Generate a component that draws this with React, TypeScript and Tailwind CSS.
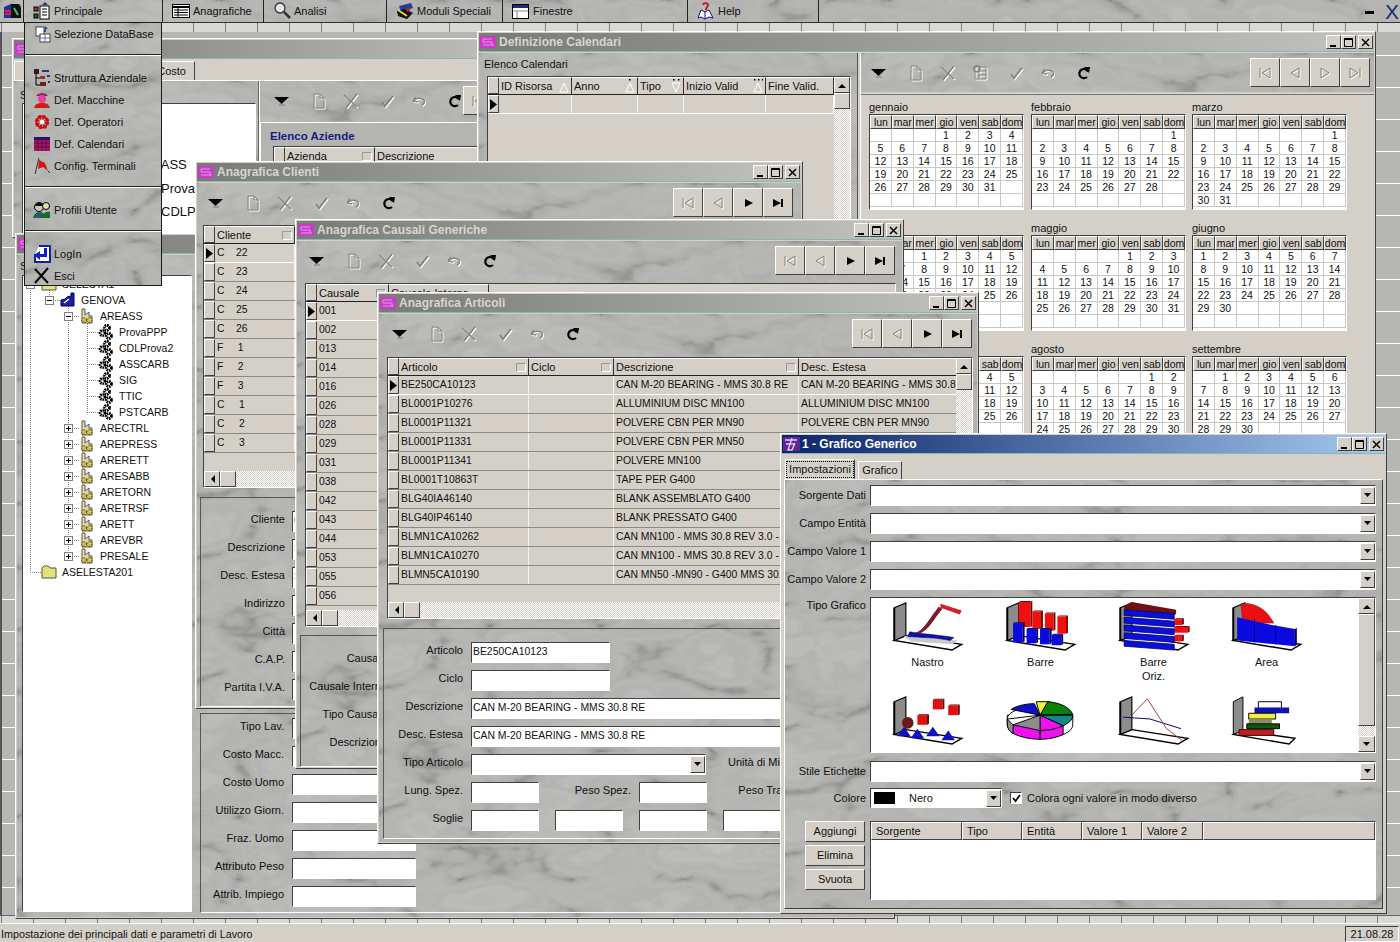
import type { ReactNode } from "react";

const raised = "border border-t-white border-l-white border-r-[#404040] border-b-[#404040]";
const sunken = "border border-t-[#404040] border-l-[#404040] border-r-white border-b-white";
const marble = "relative isolate bg-[#b4b4b0]";
const groove = "border border-t-[#555552] border-l-[#555552] border-r-white border-b-white";
const dither = "bg-[repeating-conic-gradient(#d4d0c8_0%_25%,#ffffff_0%_50%)] bg-[size:2px_2px]";
const ticks = "bg-[#d8d8d4] bg-[linear-gradient(to_right,#7d7d79_1px,transparent_1px)] bg-[size:32px_100%] bg-[position:1px_0]";

function Marble() {
  return (
    <svg className="absolute inset-0 -z-10 w-full h-full" aria-hidden="true">
      <rect width="100%" height="100%" filter="url(#marble)" />
    </svg>
  );
}

function Ic({ w = 18, h = 18, children }: { w?: number; h?: number; children: ReactNode }) {
  return (
    <svg width={w} height={h} viewBox={`0 0 ${w} ${h}`} className="shrink-0">
      {children}
    </svg>
  );
}

function Ghost({ children }: { children: ReactNode }) {
  return (
    <>
      <g transform="translate(1 1)" stroke="#ffffff" fill="none" strokeWidth="1.5">{children}</g>
      <g stroke="#84847f" fill="none" strokeWidth="1.5">{children}</g>
    </>
  );
}

const ToolDrop = () => <Ic w={16} h={16}><path d="M0 4h15l-7.5 7z" fill="#000" /><path d="M5 12h6" stroke="#777" /></Ic>;
const ToolPage = () => <Ic w={16} h={18}><Ghost><path d="M3 2h6l4 4v10H3zM9 2v4h4" strokeWidth="1" /></Ghost></Ic>;
const ToolX = () => <Ic w={16} h={16}><Ghost><path d="M1 2l13 12M14 1L3 15" /></Ghost></Ic>;
const ToolCal = () => <Ic w={16} h={18}><Ghost><path d="M3 3h11v12H3zM7 7h7M7 11h7M7 3v12" strokeWidth="1" /><circle cx="5" cy="5" r="3" /></Ghost></Ic>;
const ToolCheck = () => <Ic w={16} h={16}><Ghost><path d="M3 9l3 4 8-10" strokeWidth="2" /></Ghost></Ic>;
const ToolUndo = () => <Ic w={16} h={16}><Ghost><path d="M2 8l3-4M2 8l5 1M2 8c3-3 8-4 11-1 1 2 0 4-2 5" /></Ghost></Ic>;
const ToolRefresh = () => <Ic w={16} h={16}><path d="M12 6.5A4.6 4.6 0 1 0 11 12" stroke="#000" strokeWidth="2.2" fill="none" /><path d="M8 2l6 0-1 6z" fill="#000" /></Ic>;

function Toolbar({ lead, navClass, extra, navOn = true }: { lead: string; navClass: string; extra?: boolean; navOn?: boolean }) {
  return (
    <div className="h-[39px] flex items-center shrink-0">
      <div className={lead}><ToolDrop /></div>
      <div className="ml-[21px]"><ToolPage /></div>
      <div className="ml-[16px]"><ToolX /></div>
      {extra && <div className="ml-[16px]"><ToolCal /></div>}
      <div className="ml-[20px]"><ToolCheck /></div>
      <div className="ml-[16px]"><ToolUndo /></div>
      <div className="ml-[20px]"><ToolRefresh /></div>
      <div className={`ml-auto flex ${navClass}`}>
        <NavBtn><Ghost><path d="M3 3v10M13 3L5 8l8 5z" strokeWidth="1" /></Ghost></NavBtn>
        <NavBtn><Ghost><path d="M12 3L4 8l8 5z" strokeWidth="1" /></Ghost></NavBtn>
        <NavBtn>{navOn ? <path d="M5 4l8 4-8 4z" fill="#000" /> : <Ghost><path d="M4 3l8 5-8 5z" strokeWidth="1" /></Ghost>}</NavBtn>
        <NavBtn>{navOn ? <path d="M3 4l8 4-8 4zM11 4h2v8h-2z" fill="#000" /> : <Ghost><path d="M13 3v10M3 3l8 5-8 5z" strokeWidth="1" /></Ghost>}</NavBtn>
      </div>
    </div>
  );
}

function NavBtn({ children }: { children: ReactNode }) {
  return (
    <div className={`w-[30px] h-[29px] bg-[#d4d0c8] flex items-center justify-center ${raised}`}>
      <Ic w={16} h={16}>{children}</Ic>
    </div>
  );
}

function Win({ title, place, active, children }: { title: string; place: string; active?: boolean; children: ReactNode }) {
  return (
    <div className={`absolute flex flex-col overflow-hidden bg-[#d4d0c8] p-px ${raised} ${place}`}>
      <div className={`h-[19px] shrink-0 flex items-center pl-px pr-px border-b border-[#7fbab5] ${active ? "bg-[linear-gradient(90deg,#0a246a,#a6caf0)] text-white" : "bg-[linear-gradient(90deg,#7a7a76,#c2c2be)] text-[#d6d6ce]"}`}>
        <svg width="17" height="14" viewBox="0 0 17 14" className="shrink-0 mr-[2px]">
          {active ? (
            <>
              <rect x="0" y="0" width="17" height="14" fill="#5b2a8c" />
              <path d="M2 3h12M3 7h9M9 1L5 13h4l3-7" stroke="#e9c6ff" strokeWidth="1.4" fill="none" />
            </>
          ) : (
            <>
              <rect x="0" y="1" width="16" height="12" fill="#c53fc5" />
              <path d="M3 4h9M3 10h11M3 4v3h9v3" stroke="#e694e6" fill="none" />
            </>
          )}
        </svg>
        <span className="font-bold text-[12px] whitespace-nowrap">{title}</span>
        <div className="ml-auto flex items-center">
          <WinBtn><path d="M3 10h6" stroke="#000" strokeWidth="2" /></WinBtn>
          <WinBtn><path d="M2.5 2.5h8v8h-8zM2.5 3.5h8" stroke="#000" fill="none" /></WinBtn>
          <div className="w-[2px]" />
          <WinBtn><path d="M3 3l7 7M10 3l-7 7" stroke="#000" strokeWidth="1.5" /></WinBtn>
        </div>
      </div>
      <div className="flex-1 min-h-0 mt-px flex flex-col">{children}</div>
    </div>
  );
}

function WinBtn({ children }: { children: ReactNode }) {
  return (
    <div className={`w-[15px] h-[14px] bg-[#d4d0c8] flex items-center justify-center ${raised}`}>
      <Ic w={13} h={12}>{children}</Ic>
    </div>
  );
}

type Col = { name: string; w: string; glyph?: "box" | "up" | "none"; dots?: number; down?: boolean };

function Glyph({ col }: { col: Col }) {
  if (col.glyph === "box") return <div className="ml-auto mr-[2px] w-[10px] h-[9px] border border-t-[#999] border-l-[#999] border-r-white border-b-white" />;
  if (col.glyph === "up")
    return (
      <svg width="10" height="14" viewBox="0 0 10 14" className="ml-auto mr-[2px]">
        {[0, 1, 2].slice(0, col.dots ?? 0).map((d) => (
          <rect key={d} x={(col.dots === 1 ? 4 : col.dots === 2 ? 2 + d * 5 : d * 4 + 1)} y="0" width="1.5" height="1.5" fill="#000" />
        ))}
        <path d={col.down ? "M1 4h8l-4 9z" : "M5 4l4 9H1z"} fill="none" stroke="#fff" />
      </svg>
    );
  return null;
}

function VScroll() {
  return (
    <div className={`w-[16px] shrink-0 flex flex-col ${dither}`}>
      <div className={`h-[16px] bg-[#d4d0c8] flex items-center justify-center ${raised}`}>
        <svg width="8" height="5" viewBox="0 0 8 5"><path d="M0 5l4-4 4 4z" fill="#000" /></svg>
      </div>
      <div className={`h-[16px] bg-[#d4d0c8] ${raised}`} />
    </div>
  );
}

function HScroll() {
  return (
    <div className={`h-[16px] shrink-0 flex ${dither}`}>
      <div className={`w-[16px] bg-[#d4d0c8] flex items-center justify-center ${raised}`}>
        <svg width="5" height="8" viewBox="0 0 5 8"><path d="M5 0L1 4l4 4z" fill="#000" /></svg>
      </div>
      <div className={`w-[16px] bg-[#d4d0c8] ${raised}`} />
    </div>
  );
}

function Grid({ cols, rows, place, vs, hs }: { cols: Col[]; rows: string[][]; place: string; vs?: boolean; hs?: boolean }) {
  return (
    <div className={`flex flex-col bg-[#d4d0c8] overflow-hidden ${sunken} ${place}`}>
      <div className="flex-1 min-h-0 flex">
        <div className="flex-1 min-w-0 overflow-hidden">
          <div className="flex h-[18px] border-b border-[#222]">
            <div className={`w-[11px] shrink-0 bg-[#d4d0c8] ${raised}`} />
            {cols.map((c) => (
              <div key={c.name} className={`shrink-0 flex items-center pl-[2px] bg-[#d4d0c8] whitespace-nowrap overflow-hidden border-r border-[#333] border-t border-t-white ${c.w}`}>
                {c.name}
                <Glyph col={c} />
              </div>
            ))}
          </div>
          {rows.map((r, i) => (
            <div key={r[0] + i} className={`flex h-[19px] text-[10.4px] border-b ${i === 0 ? "border-white" : "border-[#8b8b86]"}`}>
              <div className={`w-[11px] shrink-0 bg-[#d4d0c8] flex items-center justify-center ${raised}`}>
                {i === 0 && <svg width="7" height="11" viewBox="0 0 7 11"><path d="M0 0l7 5.5L0 11z" fill="#000" /></svg>}
              </div>
              {cols.map((c, j) => (
                <div key={c.name} className={`shrink-0 flex items-center pl-[2px] whitespace-pre overflow-hidden border-r border-[#f4f4f0] ${c.w}`}>
                  {r[j] ?? ""}
                </div>
              ))}
            </div>
          ))}
        </div>
        {vs && <VScroll />}
      </div>
      {hs && <HScroll />}
    </div>
  );
}

function Field({ w, value, drop }: { w: string; value?: string; drop?: boolean }) {
  return (
    <div className={`h-[21px] shrink-0 bg-white flex items-center pl-[1px] text-[10.4px] whitespace-nowrap overflow-hidden ${sunken} ${w}`}>
      {value}
      {drop && <DropBtn />}
    </div>
  );
}

function DropBtn() {
  return (
    <div className={`ml-auto w-[15px] h-[17px] shrink-0 bg-[#d4d0c8] flex items-center justify-center ${raised}`}>
      <svg width="7" height="4" viewBox="0 0 7 4"><path d="M0 0h7L3.5 4z" fill="#000" /></svg>
    </div>
  );
}

function FormRow({ label, w, gap, up, children }: { label: string; w: string; gap: string; up?: boolean; children?: ReactNode }) {
  return (
    <div className="h-[28px] flex items-center">
      <div className={`shrink-0 text-right whitespace-nowrap ${up ? "-mt-[4px]" : ""} ${w} ${gap}`}>{label}</div>
      {children}
    </div>
  );
}

// tree icons
const Folder = () => <Ic w={16} h={14}><path d="M1 3l2-2h4l2 2h6v10H1z" fill="#e6e27a" stroke="#55553a" /></Ic>;
const Factory = () => (
  <Ic w={16} h={16}>
    <path d="M3 1h3v6l4-3v4h3v7H3z" fill="#e4dca0" stroke="#555" />
    <circle cx="5" cy="12" r="2.4" fill="#d8c040" stroke="#222" strokeDasharray="1 1" />
    <circle cx="10.5" cy="12" r="2.6" fill="#d8c040" stroke="#222" strokeDasharray="1 1" />
  </Ic>
);
const Gears = () => (
  <Ic w={16} h={16}>
    <circle cx="9" cy="3.8" r="2.5" fill="#fff" stroke="#000" strokeWidth="2.8" strokeDasharray="1.6 .7" />
    <circle cx="4.5" cy="9" r="2.5" fill="#fff" stroke="#000" strokeWidth="2.8" strokeDasharray="1.6 .7" />
    <circle cx="11" cy="12" r="2.5" fill="#fff" stroke="#000" strokeWidth="2.8" strokeDasharray="1.6 .7" />
  </Ic>
);
const Plant = () => (
  <Ic w={16} h={16}>
    <path d="M1 14V8l4-1 2-2 4-1V1h3v13z" fill="#1c1ca8" stroke="#000050" />
    <path d="M4 11l5-4" stroke="#fff" strokeWidth="1.5" />
  </Ic>
);

function TreeRow({ pad, exp, icon, text }: { pad: string; exp?: "+" | "-"; icon: ReactNode; text: string }) {
  return (
    <div className={`h-[16px] flex items-center ${pad}`}>
      <div className="w-[9px] h-[9px] shrink-0 relative">
        {exp && (
          <svg width="9" height="9" viewBox="0 0 9 9" className="block">
            <rect x="0.5" y="0.5" width="8" height="8" fill="#fff" stroke="#808080" />
            <path d={exp === "+" ? "M2 4.5h5M4.5 2v5" : "M2 4.5h5"} stroke="#000" />
          </svg>
        )}
      </div>
      <div className="w-[16px] ml-[6px] mr-[5px] shrink-0 relative">{icon}</div>
      <span className="text-[10.5px]">{text}</span>
    </div>
  );
}

function Tree() {
  const areas = ["ARECTRL", "AREPRESS", "ARERETT", "ARESABB", "ARETORN", "ARETRSF", "ARETT", "AREVBR", "PRESALE"];
  const sub = ["ProvaPPP", "CDLProva2", "ASSCARB", "SIG", "TTIC", "PSTCARB"];
  const h = [40, 152, 168, 184, 200, 216, 232, 248, 264, 280];
  return (
    <div className="relative">
      <svg className="absolute left-0 top-0" width="170" height="310" fill="none" stroke="#808080" strokeDasharray="1 1">
        <path d="M7.5 0V296.5H18M26.5 8V24.5H37M45.5 24V280.5M64.5 40V136.5" />
        {h.map((y) => <path key={y} d={`M45 ${y + 0.5}H56`} />)}
        {[56, 72, 88, 104, 120, 136].map((y) => <path key={y} d={`M64 ${y + 0.5}H75`} />)}
      </svg>
      <TreeRow pad="pl-[3px]" exp="-" icon={<Folder />} text="SELESTA1" />
      <TreeRow pad="pl-[22px]" exp="-" icon={<Plant />} text="GENOVA" />
      <TreeRow pad="pl-[41px]" exp="-" icon={<Factory />} text="AREASS" />
      {sub.map((s) => <TreeRow key={s} pad="pl-[60px]" icon={<Gears />} text={s} />)}
      {areas.map((s) => <TreeRow key={s} pad="pl-[41px]" exp="+" icon={<Factory />} text={s} />)}
      <TreeRow pad="pl-[3px]" icon={<Folder />} text="ASELESTA201" />
    </div>
  );
}

const monthData: [string, number, number][] = [
  ["gennaio", 3, 31], ["febbraio", 6, 28], ["marzo", 6, 31],
  ["aprile", 2, 30], ["maggio", 4, 31], ["giugno", 0, 30],
  ["luglio", 2, 31], ["agosto", 5, 31], ["settembre", 1, 30],
  ["ottobre", 3, 31], ["novembre", 6, 30], ["dicembre", 1, 31],
];
const dayNames = ["lun", "mar", "mer", "gio", "ven", "sab", "dom"];

function Month({ name, first, len }: { name: string; first: number; len: number }) {
  const cells = Array.from({ length: 42 }, (_, i) => (i >= first && i - first < len ? String(i - first + 1) : ""));
  return (
    <div className="h-[121px]">
      <div className="h-[13px] leading-[13px]">{name}</div>
      <div className={`w-[155px] h-[96px] bg-white overflow-hidden ${sunken}`}>
        <div className="grid grid-cols-7 h-[14px] bg-[#d4d0c8]">
          {dayNames.map((d) => (
            <div key={d} className={`flex items-center justify-center text-[10.5px] ${raised}`}>{d}</div>
          ))}
        </div>
        <div className="grid grid-cols-7 auto-rows-[13px]">
          {cells.map((c, i) => (
            <div key={i} className="flex items-center justify-center border-r border-b border-[#c8c8c4] text-[10.5px]">{c}</div>
          ))}
        </div>
      </div>
    </div>
  );
}

// chart thumbnails for Tipo Grafico
function ChartBase() {
  return (
    <>
      <path d="M2 42L14 37 72 46 62 52z" fill="#fff" stroke="#000" strokeWidth="1.5" />
      <path d="M2 8L14 3V37L2 42z" fill="#8c8c8c" stroke="#000" strokeWidth="1.2" />
      <path d="M2 8V42" stroke="#000" strokeWidth="2" />
    </>
  );
}
function Chart({ children }: { children: ReactNode }) {
  return <svg width="74" height="52" viewBox="0 0 74 54">{children}</svg>;
}
function Bar3d({ x, y, w, h, c, d }: { x: number; y: number; w: number; h: number; c: string; d: string }) {
  return (
    <g>
      <rect x={x} y={y} width={w} height={h} fill={c} />
      <path d={`M${x + w} ${y}l2 -1v${h}l-2 1z`} fill={d} />
      <path d={`M${x} ${y}l2 -1h${w}l-2 1z`} fill={d} />
    </g>
  );
}
const charts: { name: string; draw: ReactNode }[] = [
  {
    name: "Nastro",
    draw: (
      <>
        <ChartBase />
        <path d="M12 38L20 43 62 46 68 42 14 37z" fill="#c8c8d0" />
        <path d="M18 33c10 2 30 3 46 6l-4 3c-14-3-32-3-44-4z" fill="#1010b0" stroke="#000040" strokeWidth=".5" />
        <path d="M24 34c8-2 14-14 24-27l4 2c-9 11-14 22-24 26z" fill="#7a1c30" />
        <path d="M50 4l22 7-2 4-20-7z" fill="#d02030" />
      </>
    ),
  },
  {
    name: "Barre",
    draw: (
      <>
        <ChartBase />
        <Bar3d x={14} y={2} w={12} h={26} c="#f01010" d="#7a0000" />
        <Bar3d x={28} y={12} w={9} h={18} c="#f01010" d="#7a0000" />
        <Bar3d x={41} y={14} w={9} h={18} c="#f01010" d="#7a0000" />
        <Bar3d x={54} y={17} w={9} h={18} c="#f01010" d="#7a0000" />
        <Bar3d x={8} y={24} w={10} h={20} c="#0a0ae0" d="#000060" />
        <Bar3d x={22} y={30} w={10} h={15} c="#0a0ae0" d="#000060" />
        <Bar3d x={36} y={30} w={10} h={16} c="#0a0ae0" d="#000060" />
        <Bar3d x={48} y={36} w={10} h={11} c="#0a0ae0" d="#000060" />
      </>
    ),
  },
  {
    name: "Barre\nOriz.",
    draw: (
      <>
        <ChartBase />
        <path d="M6 6L14 2 60 10v5L6 10z" fill="#701010" />
        <Bar3d x={58} y={20} w={8} h={6} c="#f01010" d="#700000" />
        <Bar3d x={58} y={28} w={14} h={6} c="#f01010" d="#700000" />
        <Bar3d x={58} y={37} w={8} h={6} c="#f01010" d="#700000" />
        {[10, 18, 26, 34, 42].map((y) => (
          <path key={y} d={`M6 ${y}L58 ${y + 4}v6L6 ${y + 6}z`} fill="#0a10d8" stroke="#000060" strokeWidth=".8" />
        ))}
      </>
    ),
  },
  {
    name: "Area",
    draw: (
      <>
        <ChartBase />
        <path d="M10 4c12-2 26 4 34 20H12z" fill="#e81010" stroke="#700" strokeWidth=".5" />
        <path d="M6 18l36 8 24 4v18L6 42z" fill="#0a0ae0" />
        <path d="M66 30l2-1v17l-2 2z" fill="#000060" />
        <path d="M24 20v24M46 26v20" stroke="#000090" />
      </>
    ),
  },
  {
    name: "Punti",
    draw: (
      <>
        <ChartBase />
        {[[26, 22], [42, 6], [58, 12]].map(([x, y]) => <Bar3d key={x} x={x} y={y} w={10} h={10} c="#e01010" d="#700000" />)}
        <circle cx="16" cy="30" r="6" fill="#701818" />
        {[[12, 34], [26, 36], [42, 34], [58, 38]].map(([x, y]) => <path key={x} d={`M${x} ${y}l7 10H${x - 7}z`} fill="#1010c0" />)}
      </>
    ),
  },
  {
    name: "Torta",
    draw: (
      <>
        <path d="M2 22v10c0 8 15 14 34 14s34-6 34-14V22z" fill="#fff" stroke="#000" />
        <path d="M36 22L2 26c0-8 15-12 26-13z" fill="#fff" stroke="#000" />
        <path d="M36 22L6 16c4-3 14-6 24-6z" fill="#1010c8" stroke="#000" />
        <path d="M36 22l-4-14h14z" fill="#f0f040" stroke="#000" />
        <path d="M36 22l8-14c12 1 22 5 26 13z" fill="#0a800a" stroke="#000" />
        <path d="M36 22h34c0 5-4 8-10 11z" fill="#108888" stroke="#000" />
        <path d="M36 22l24 11c-6 3-14 5-24 5z" fill="#f010f0" stroke="#000" />
        <path d="M36 22v16c-10 0-20-2-28-6z" fill="#8c8c8c" stroke="#000" />
        <path d="M36 38v9c-10 0-20-2-28-6v-9zM36 38c10 0 18-2 24-5v9c-6 3-14 5-24 5z" fill="#f010f0" stroke="#000" />
        <path d="M8 32v9c-4-2-6-6-6-9v-6z" fill="#8c8c8c" stroke="#000" />
      </>
    ),
  },
  {
    name: "Linee",
    draw: (
      <>
        <ChartBase />
        <path d="M5 24l28 2 32 10" stroke="#000070" fill="none" />
        <path d="M14 22L30 5 50 36 66 48" stroke="#a03848" fill="none" />
      </>
    ),
  },
  {
    name: "Gradini",
    draw: (
      <>
        <path d="M2 42L10 38 66 46 60 52z" fill="#fff" stroke="#000" strokeWidth="1.5" />
        <path d="M2 8L12 3V38L2 42z" fill="#8c8c8c" stroke="#000" />
        <path d="M28 8h24v7H28z" fill="#fff" stroke="#000" />
        <path d="M24 14h36v6H24z" fill="#1010b8" />
        <path d="M18 20h28v6H18z" fill="#f0f040" stroke="#000" />
        <path d="M18 26h24v5H18z" fill="#8c8c6c" />
        <path d="M16 31h34v5H16z" fill="#0a5a0a" stroke="#000" />
        <path d="M8 37h36v6H8z" fill="#c02020" stroke="#400" />
      </>
    ),
  },
];

// menu icons
const mi = {
  principale: <Ic><rect x="7" y="4" width="9" height="13" fill="#fff" stroke="#000" /><path d="M9 7h5M9 10h5M9 13h5" stroke="#000" /><rect x="1" y="5" width="4" height="4" fill="#a03030" stroke="#000" /><rect x="1" y="12" width="4" height="4" fill="#206020" stroke="#000" /><path d="M9 3l3-3 3 3z" fill="#303070" /></Ic>,
  anagrafiche: <Ic w={18} h={14}><rect x="0.5" y="0.5" width="17" height="13" fill="#fff" stroke="#000" /><path d="M1 3h16" stroke="#000" strokeWidth="2" /><path d="M2 6h14M2 8.5h14M2 11h14M6 4v9" stroke="#000" /></Ic>,
  analisi: <Ic><circle cx="7" cy="6" r="5" fill="#dfe4ea" stroke="#333" strokeWidth="1.3" /><path d="M11 10l6 6" stroke="#333" strokeWidth="2.5" /></Ic>,
  moduli: <Ic><path d="M3 4l12-3 2 5-12 4z" fill="#2040a0" /><path d="M1 9l8-2 8 4-6 6-9-3z" fill="#101010" /><path d="M2 8l9 6" stroke="#e8e020" strokeWidth="2" /><circle cx="12" cy="8" r="2" fill="#c02020" /></Ic>,
  finestre: <Ic w={17} h={15}><rect x="0.5" y="0.5" width="16" height="14" fill="#fff" stroke="#000" /><rect x="1" y="1" width="15" height="3" fill="#1c2a80" /><path d="M1 7h15M5 7v7" stroke="#888" /></Ic>,
  help: <Ic w={17} h={18}><path d="M1 16l3-8 4 2 4-2 4 8-4-1-4 2-4-2z" fill="#fff" stroke="#101080" /><path d="M8 10v7" stroke="#101080" /><path d="M6 3c1-3 5-2 5 0 0 2-2 2-2 5" fill="none" stroke="#c02020" strokeWidth="2" /></Ic>,
  db: <Ic><rect x="3" y="2" width="8" height="9" fill="#fff" stroke="#444" /><rect x="7" y="9" width="10" height="8" fill="#fff" stroke="#444" /><path d="M12 9v8M7 13h10" stroke="#6868a8" /><path d="M12 1l3 3h-2v3h-2" fill="#3040a0" /></Ic>,
  struttura: <Ic><rect x="1" y="0" width="5" height="5" fill="#401818" /><path d="M3 5v11h4M3 9h4" stroke="#000" fill="none" /><rect x="7" y="7" width="5" height="3" fill="#a03030" /><rect x="7" y="13" width="6" height="4" fill="#702020" /><path d="M9 2h7M14 7h3M15 13h2" stroke="#303080" strokeWidth="2" /></Ic>,
  macchine: <Ic><path d="M3 5h12l-2-2-4-1-4 1z" fill="#902060" /><circle cx="9" cy="8" r="4" fill="#e840a0" /><path d="M1 17c1-4 4-5 8-5s7 1 8 5z" fill="#d02010" /></Ic>,
  operatori: <Ic><circle cx="9" cy="9" r="5" fill="none" stroke="#d81010" strokeWidth="4.5" strokeDasharray="2.5 1.4" /><circle cx="9" cy="9" r="5.5" fill="none" stroke="#c01010" strokeWidth="2" /><circle cx="9" cy="9" r="2" fill="#fff" /></Ic>,
  calendari: <Ic><rect x="1" y="2" width="16" height="14" fill="#b01060" /><rect x="1" y="2" width="16" height="3" fill="#301060" /><path d="M1 8h16M1 12h16M5 5v11M9 5v11M13 5v11" stroke="#501050" /></Ic>,
  terminali: <Ic><path d="M6 1L2 17" stroke="#303030" /><path d="M6 3l6 3 3 8-5-4-5 2z" fill="#d01818" /><path d="M15 14l2 2" stroke="#303030" /></Ic>,
  profili: <Ic><circle cx="6" cy="6" r="4.5" fill="#c8c8b8" stroke="#000" /><path d="M2 5c0-4 8-5 9 0z" fill="#101010" /><path d="M0 17c1-5 4-6 7-6s5 2 5 6z" fill="#206060" /><circle cx="13" cy="5" r="3.5" fill="#e0e0a0" stroke="#000" /><path d="M10 17c0-4 2-7 7-6v6z" fill="#107020" /></Ic>,
  login: <Ic><path d="M6 1h11v16H2V9" fill="#fff" stroke="#1020a0" strokeWidth="2" /><path d="M11 3v6H7V6L1 10l6 5v-3h7V3z" fill="#1020d0" /></Ic>,
  esci: <Ic><path d="M2 2l13 14M15 1L2 16" stroke="#000" strokeWidth="2" /></Ic>,
};

function TopItem({ w, icon, text }: { w: string; icon: ReactNode; text: string }) {
  return (
    <div className={`h-[22px] flex items-center pl-[9px] border-r border-[#222] gap-[4px] whitespace-nowrap ${w}`}>
      <div className="w-[17px] flex justify-center">{icon}</div>
      <span>{text}</span>
    </div>
  );
}

function MenuItem({ icon, text }: { icon: ReactNode; text: string }) {
  return (
    <div className="h-[22px] flex items-center pl-[7px] gap-[3px] whitespace-nowrap">
      <div className="w-[19px] flex justify-center">{icon}</div>
      <span>{text}</span>
    </div>
  );
}

export default function App() {
  const clienti = [["C    22"], ["C    23"], ["C    24"], ["C    25"], ["C    26"], ["F     1"], ["F     2"], ["F     3"], ["C     1"], ["C     2"], ["C     3"]];
  const causali = ["001", "002", "013", "014", "016", "026", "028", "029", "031", "038", "042", "043", "044", "053", "055", "056"].map((c) => [c]);
  const articoli = [
    ["BE250CA10123", "", "CAN M-20 BEARING - MMS 30.8 RE", "CAN M-20 BEARING - MMS 30.8 RE"],
    ["BL0001P10276", "", "ALLUMINIUM DISC MN100", "ALLUMINIUM DISC MN100"],
    ["BL0001P11321", "", "POLVERE CBN PER MN90", "POLVERE CBN PER MN90"],
    ["BL0001P11331", "", "POLVERE CBN PER MN50", "POLVERE CBN PER MN50"],
    ["BL0001P11341", "", "POLVERE MN100", "POLVERE MN100"],
    ["BL0001T10863T", "", "TAPE PER G400", "TAPE PER G400"],
    ["BLG40IA46140", "", "BLANK ASSEMBLATO G400", "BLANK ASSEMBLATO G400"],
    ["BLG40IP46140", "", "BLANK PRESSATO G400", "BLANK PRESSATO G400"],
    ["BLMN1CA10262", "", "CAN MN100 - MMS 30.8 REV 3.0 - G400", "CAN MN100 - MMS 30.8 REV 3.0"],
    ["BLMN1CA10270", "", "CAN MN100 - MMS 30.8 REV 3.0 - G400", "CAN MN100 - MMS 30.8 REV 3.0"],
    ["BLMN5CA10190", "", "CAN MN50 -MN90 - G400 MMS 30.8 REV", "CAN MN50 -MN90 - G400"],
  ];

  return (
    <div className="relative w-[1400px] h-[942px] overflow-hidden flex flex-col font-['Liberation_Sans',Arial,sans-serif] text-[11px] leading-none text-[#111]">
      <svg className="absolute w-0 h-0" aria-hidden="true">
        <filter id="marble" x="0" y="0" width="100%" height="100%" colorInterpolationFilters="sRGB">
          <feTurbulence type="turbulence" baseFrequency="0.009 0.016" numOctaves="4" seed="11" />
          <feColorMatrix values="1 0 0 0 0  1 0 0 0 0  1 0 0 0 0  0 0 0 0 1" />
          <feComponentTransfer>
            <feFuncR type="table" tableValues="0.55 0.68 0.72 0.7 0.74 0.72 0.76 0.74" />
            <feFuncG type="table" tableValues="0.55 0.68 0.72 0.7 0.74 0.72 0.76 0.74" />
            <feFuncB type="table" tableValues="0.54 0.67 0.71 0.69 0.73 0.71 0.75 0.73" />
          </feComponentTransfer>
        </filter>
      </svg>

      {/* top bar */}
      <div className={`h-[23px] shrink-0 flex items-start border-b border-[#333] ${marble}`}>
        <Marble />
        <div className="w-[24px] h-[22px] flex items-center justify-center border-r border-[#222]">
          <Ic w={18} h={16}><path d="M1 4l7-3v14H1z" fill="#2030a0" /><path d="M8 1h8l2 3v11H8z" fill="#101010" /><path d="M2 8h6M2 11h6" stroke="#e02040" strokeWidth="2" /><path d="M11 5l4 7" stroke="#40c060" strokeWidth="2" /></Ic>
        </div>
        <TopItem w="w-[139px]" icon={mi.principale} text="Principale" />
        <TopItem w="w-[101px]" icon={mi.anagrafiche} text="Anagrafiche" />
        <TopItem w="w-[123px]" icon={mi.analisi} text="Analisi" />
        <TopItem w="w-[116px]" icon={mi.moduli} text="Moduli Speciali" />
        <TopItem w="w-[185px]" icon={mi.finestre} text="Finestre" />
        <TopItem w="w-[131px]" icon={mi.help} text="Help" />
        <div className="ml-auto mr-[1px] flex items-center h-[22px] gap-[11px]">
          <div className="w-[9px] h-[3px] bg-black mt-[3px]" />
          <span className="text-[21px] text-[#1c2a80]">X</span>
        </div>
      </div>

      {/* desktop: ruler strips top and bottom, tiled grey between */}
      <div className="flex-1 min-h-0 flex flex-col">
        <div className={`h-[9px] shrink-0 ${ticks}`} />
        <div className="flex-1 min-h-0 bg-[#b6b6b2] border-l-2 border-l-[#555] bg-[linear-gradient(to_bottom,#ffffff_1px,transparent_1px)] bg-[size:100%_32px] bg-[position:0_23px]" />
        <div className={`h-[8px] shrink-0 border-t border-[#666] ${ticks}`} />
      </div>

      {/* status bar */}
      <div className="h-[19px] shrink-0 flex items-end bg-[#d4d0c8] border-t border-white">
        <div className="flex-1 h-[16px] flex items-center pl-[1px] text-[10.75px]">Impostazione dei principali dati e parametri di Lavoro</div>
        <div className={`w-[54px] h-[16px] mr-[1px] flex items-center justify-center ${sunken}`}>21.08.28</div>
      </div>

      {/* back window: struttura */}
      <Win title="Struttura Aziendale" place="left-[12px] top-[38px] w-[520px] h-[200px]">
        <div className="h-[21px] shrink-0 flex items-end border-b border-white">
          <div className={`w-[181px] h-[19px] flex items-center justify-end pr-[8px] text-[11px] ${raised} border-b-0`}>Centri di Costo</div>
        </div>
        <div className={`flex-1 min-h-0 flex ${marble}`}>
          <Marble />
          <div className="w-[242px] shrink-0 pl-[8px]">
            <div className="h-[22px] flex items-end -ml-[2px] pb-[2px]">Struttura</div>
            <div className={`h-[200px] bg-white text-[13px] ${sunken}`}>
              <div className="h-[49px]" />
              <div className="h-[23.5px] flex items-center pl-[111px]">AREASS</div>
              <div className="h-[23.5px] flex items-center pl-[138px]">ProvaPPP</div>
              <div className="h-[23.5px] flex items-center pl-[138px]">CDLProva2</div>
            </div>
          </div>
          <div className="w-[2px] ml-[2px] bg-white border-l border-[#666]" />
          <div className="flex-1 min-w-0">
            <Toolbar lead="ml-[14px]" navClass="mr-[8px]" />
            <div className={`mt-[2px] h-[200px] pl-[3px] border-t border-l border-white ${marble}`}>
              <div className="h-[21px] flex items-center pl-[6px] pt-[7px] font-bold text-[11.5px] text-[#1c1c80]">Elenco Aziende</div>
              <Grid
                place="ml-[9px] mt-[2px] h-[60px] w-[300px]"
                cols={[{ name: "Azienda", w: "w-[90px]", glyph: "box" }, { name: "Descrizione", w: "w-[180px]" }]}
                rows={[]}
              />
            </div>
          </div>
        </div>
      </Win>

      {/* back window: tree + macchine form */}
      <Win title="Def. Macchine" place="left-[15px] top-[233px] w-[880px] h-[686px]">
        <div className={`flex-1 min-h-0 flex ${marble}`}>
          <Marble />
          <div className="w-[175px] shrink-0 flex flex-col pl-[5px] pb-[5px]">
            <div className="h-[20px] flex items-center -ml-[2px] pt-[2px]">Struttura</div>
            <div className={`flex-1 min-h-0 w-[170px] bg-white overflow-hidden ${sunken}`}>
              <Tree />
            </div>
          </div>
          <div className="flex-1 min-w-0 flex flex-col justify-end pl-[8px] pb-[4px]">
            <div className={`h-[200px] ${groove}`}>
              {["Tipo Lav.", "Costo Macc.", "Costo Uomo", "Utilizzo Giorn.", "Fraz. Uomo", "Attributo Peso", "Attrib. Impiego"].map((l) => (
                <FormRow key={l} label={l} up w="w-[83px]" gap="mr-[8px]">
                  <Field w="w-[124px]" />
                </FormRow>
              ))}
            </div>
          </div>
        </div>
      </Win>

      {/* Definizione Calendari */}
      <Win title="Definizione Calendari" place="left-[477px] top-[31px] w-[899px] h-[810px]">
        <div className="flex-1 min-h-0 flex">
          <div className={`w-[379px] shrink-0 border-r border-[#555] ${marble}`}>
            <Marble />
            <div className="h-[23px] flex items-center pl-[5px]">Elenco Calendari</div>
            <Grid
              place="ml-[8px] w-[364px] h-[420px]"
              vs
              cols={[
                { name: "ID Risorsa", w: "w-[73px]", glyph: "up" },
                { name: "Anno", w: "w-[66px]", glyph: "up", dots: 1 },
                { name: "Tipo", w: "w-[46px]", glyph: "up", dots: 2, down: true },
                { name: "Inizio Valid", w: "w-[82px]", glyph: "up", dots: 3 },
                { name: "Fine Valid.", w: "w-[68px]" },
              ]}
              rows={[["", "", "", "", ""]]}
            />
          </div>
          <div className="flex-1 min-w-0 ml-[2px] flex flex-col border-l border-white">
            <div className={marble}>
              <Marble />
              <Toolbar lead="ml-[10px]" navClass="mr-[4px]" extra navOn={false} />
            </div>
            <div className="flex-1 min-h-0 mt-[2px] border-t border-[#777] pt-[6px] pl-[8px] grid grid-cols-[162px_161px_161px] auto-rows-[121px] overflow-hidden">
              {monthData.map(([n, f, l]) => <Month key={n} name={n} first={f} len={l} />)}
            </div>
          </div>
        </div>
      </Win>

      {/* Anagrafica Clienti */}
      <Win title="Anagrafica Clienti" place="left-[195px] top-[161px] w-[608px] h-[548px]">
        <div className={`flex-1 min-h-0 flex flex-col ${marble}`}>
          <Marble />
          <Toolbar lead="ml-[11px]" navClass="mr-[8px]" />
          <Grid place="mx-[6px] mt-[3px] h-[263px]" hs cols={[{ name: "Cliente", w: "w-[80px]", glyph: "box" }, { name: "Descrizione", w: "w-[200px]", glyph: "box" }]} rows={clienti} />
          <div className={`mx-[3px] mt-[9px] h-[210px] pt-[9px] ${groove}`}>
            {["Cliente", "Descrizione", "Desc. Estesa", "Indirizzo", "Città", "C.A.P.", "Partita I.V.A."].map((l, i) => (
              <FormRow key={l} label={l} up w="w-[84px]" gap="mr-[7px]">
                <Field w="w-[200px]" value={i === 0 ? "C" : i < 3 ? "S" : ""} />
              </FormRow>
            ))}
          </div>
        </div>
      </Win>

      {/* Anagrafica Causali */}
      <Win title="Anagrafica Causali Generiche" place="left-[295px] top-[219px] w-[609px] h-[550px]">
        <div className={`flex-1 min-h-0 flex flex-col ${marble}`}>
          <Marble />
          <Toolbar lead="ml-[12px]" navClass="mr-[7px]" />
          <Grid place="ml-[8px] mr-[6px] mt-[3px] h-[344px]" hs cols={[{ name: "Causale", w: "w-[72px]", glyph: "box" }, { name: "Causale Interna", w: "w-[100px]" }]} rows={causali} />
          <div className={`mx-[3px] mt-[8px] h-[132px] pt-[10px] ${groove}`}>
            {["Causale", "Causale Interna", "Tipo Causale", "Descrizione"].map((l) => (
              <FormRow key={l} label={l} up w="w-[86px]" gap="mr-[7px]">
                <Field w="w-[200px]" />
              </FormRow>
            ))}
          </div>
        </div>
      </Win>

      {/* Anagrafica Articoli */}
      <Win title="Anagrafica Articoli" place="left-[377px] top-[292px] w-[602px] h-[552px]">
        <div className={`flex-1 min-h-0 flex flex-col ${marble}`}>
          <Marble />
          <Toolbar lead="ml-[13px]" navClass="mr-[5px]" />
          <Grid
            place="mx-[8px] mt-[4px] h-[262px] w-[586px]"
            vs
            hs
            cols={[
              { name: "Articolo", w: "w-[130px]", glyph: "box" },
              { name: "Ciclo", w: "w-[85px]", glyph: "box" },
              { name: "Descrizione", w: "w-[185px]", glyph: "box" },
              { name: "Desc. Estesa", w: "w-[158px]" },
            ]}
            rows={articoli}
          />
          <div className={`mx-[4px] mt-[9px] h-[211px] pt-[9px] ${groove}`}>
            <FormRow label="Articolo" up w="w-[79px]" gap="mr-[8px]"><Field w="w-[139px]" value="BE250CA10123" /></FormRow>
            <FormRow label="Ciclo" up w="w-[79px]" gap="mr-[8px]"><Field w="w-[139px]" /></FormRow>
            <FormRow label="Descrizione" up w="w-[79px]" gap="mr-[8px]"><Field w="w-[490px]" value="CAN M-20 BEARING - MMS 30.8 RE" /></FormRow>
            <FormRow label="Desc. Estesa" up w="w-[79px]" gap="mr-[8px]"><Field w="w-[490px]" value="CAN M-20 BEARING - MMS 30.8 RE" /></FormRow>
            <FormRow label="Tipo Articolo" up w="w-[79px]" gap="mr-[8px]">
              <Field w="w-[235px]" drop />
              <div className="ml-[22px] -mt-[4px] whitespace-nowrap">Unità di Misura</div>
            </FormRow>
            <FormRow label="Lung. Spez." up w="w-[79px]" gap="mr-[8px]">
              <Field w="w-[68px]" />
              <div className="w-[92px] -mt-[4px] text-right mr-[8px] whitespace-nowrap">Peso Spez.</div>
              <Field w="w-[68px]" />
              <div className="w-[90px] -mt-[4px] text-right whitespace-nowrap">Peso Trasp.</div>
            </FormRow>
            <FormRow label="Soglie" up w="w-[79px]" gap="mr-[8px]">
              <div className="flex gap-[16px]">
                <Field w="w-[68px]" />
                <Field w="w-[68px]" />
                <Field w="w-[68px]" />
                <Field w="w-[68px]" />
              </div>
            </FormRow>
          </div>
        </div>
      </Win>

      {/* Grafico Generico */}
      <Win title="1 - Grafico Generico" active place="left-[780px] top-[433px] w-[607px] h-[481px]">
        <div className="h-[24px] shrink-0 flex items-end pl-[3px]">
          <div className={`w-[70px] h-[20px] flex items-center justify-center border-b-0 ${raised}`}>
            <span className="border border-dotted border-black px-[2px] py-[2px]">Impostazioni</span>
          </div>
          <div className={`w-[44px] h-[18px] ml-[3px] flex items-center justify-center border-b-0 ${raised}`}>Grafico</div>
        </div>
        <div className={`flex-1 min-h-0 mx-[2px] mb-[3px] pt-[1px] border border-t-white border-l-white border-r-[#404040] border-b-[#404040] ${marble}`}>
          <Marble />
          {["Sorgente Dati", "Campo Entità", "Campo Valore 1", "Campo Valore 2"].map((l) => (
            <FormRow key={l} label={l} w="w-[81px]" gap="mr-[4px]">
              <Field w="w-[506px]" drop />
            </FormRow>
          ))}
          <div className="flex mt-[4px]">
            <div className="w-[81px] mr-[4px] pt-[2px] text-right leading-[13px]">Tipo Grafico</div>
            <div className={`w-[506px] h-[156px] bg-white flex overflow-hidden ${sunken}`}>
              <div className="flex-1 min-w-0 overflow-hidden grid grid-cols-[113px_113px_113px_113px] auto-rows-[94px] pt-[2px]">
                {charts.map((c) => (
                  <div key={c.name} className="flex flex-col items-center">
                    <div className="h-[52px]">{c.draw ? <Chart>{c.draw}</Chart> : null}</div>
                    <div className="mt-[3px] text-center whitespace-pre-line leading-[14px]">{c.name}</div>
                  </div>
                ))}
              </div>
              <div className={`w-[17px] shrink-0 flex flex-col ${dither}`}>
                <div className={`h-[16px] bg-[#d4d0c8] flex items-center justify-center ${raised}`}>
                  <svg width="8" height="5" viewBox="0 0 8 5"><path d="M0 5l4-4 4 4z" fill="#000" /></svg>
                </div>
                <div className={`h-[112px] bg-[#d4d0c8] ${raised}`} />
                <div className="flex-1" />
                <div className={`h-[16px] bg-[#d4d0c8] flex items-center justify-center ${raised}`}>
                  <svg width="7" height="4" viewBox="0 0 7 4"><path d="M0 0h7L3.5 4z" fill="#000" /></svg>
                </div>
              </div>
            </div>
          </div>
          <div className="mt-[4px]">
            <FormRow label="Stile Etichette" w="w-[81px]" gap="mr-[4px]"><Field w="w-[506px]" drop /></FormRow>
          </div>
          <div className="h-[26px] flex items-center">
            <div className="w-[81px] mr-[4px] text-right">Colore</div>
            <div className={`w-[132px] h-[20px] bg-white flex items-center pl-[3px] ${sunken}`}>
              <div className="w-[21px] h-[12px] bg-black" />
              <span className="ml-[14px]">Nero</span>
              <DropBtn />
            </div>
            <div className={`ml-[8px] w-[12px] h-[12px] bg-white flex items-center justify-center ${sunken}`}>
              <svg width="9" height="9" viewBox="0 0 9 9"><path d="M1 4l2.5 3L8 1" stroke="#000" strokeWidth="1.8" fill="none" /></svg>
            </div>
            <span className="ml-[5px]">Colora ogni valore in modo diverso</span>
          </div>
          <div className="flex mt-[10px]">
            <div className="ml-[20px] w-[60px] mr-[5px] flex flex-col gap-[3px]">
              {["Aggiungi", "Elimina", "Svuota"].map((b) => (
                <div key={b} className={`h-[21px] bg-[#d4d0c8] flex items-center justify-center ${raised}`}>{b}</div>
              ))}
            </div>
            <div className={`w-[506px] h-[79px] bg-white ${sunken}`}>
              <div className="flex h-[18px] bg-[#d4d0c8]">
                {[["Sorgente", "w-[91px]"], ["Tipo", "w-[60px]"], ["Entità", "w-[60px]"], ["Valore 1", "w-[60px]"], ["Valore 2", "w-[61px]"]].map(([t, w]) => (
                  <div key={t} className={`flex items-center pl-[4px] ${raised} ${w}`}>{t}</div>
                ))}
                <div className={`flex-1 ${raised}`} />
              </div>
            </div>
          </div>
        </div>
      </Win>

      {/* open menu */}
      <div className="absolute isolate left-[24px] top-[22px] w-[138px] h-[264px] bg-[#b4b4b0] border border-[#1a1a1a] overflow-hidden">
        <Marble />
        <div className="h-[32px] border-b border-[#222]">
          <MenuItem icon={mi.db} text="Selezione DataBase" />
        </div>
        <div className="h-[132px] pt-[11px] border-t border-white border-b border-b-[#222]">
          <MenuItem icon={mi.struttura} text="Struttura Aziendale" />
          <MenuItem icon={mi.macchine} text="Def. Macchine" />
          <MenuItem icon={mi.operatori} text="Def. Operatori" />
          <MenuItem icon={mi.calendari} text="Def. Calendari" />
          <MenuItem icon={mi.terminali} text="Config. Terminali" />
        </div>
        <div className="h-[44px] pt-[11px] border-t border-white border-b border-b-[#222]">
          <MenuItem icon={mi.profili} text="Profili Utente" />
        </div>
        <div className="pt-[11px] border-t border-white">
          <MenuItem icon={mi.login} text="LogIn" />
          <MenuItem icon={mi.esci} text="Esci" />
        </div>
      </div>
    </div>
  );
}
